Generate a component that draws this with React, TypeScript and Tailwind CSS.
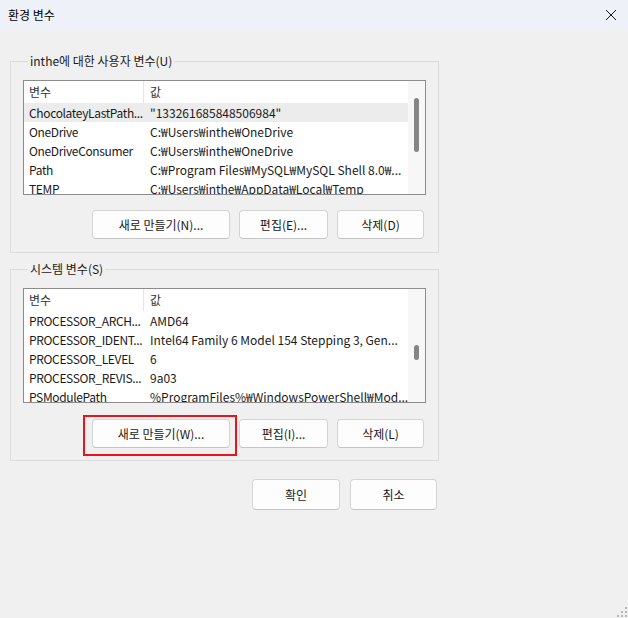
import React from 'react';

type Row = [string, string];

const userVars: Row[] = [
  ['ChocolateyLastPath...', '"133261685848506984"'],
  ['OneDrive', 'C:₩Users₩inthe₩OneDrive'],
  ['OneDriveConsumer', 'C:₩Users₩inthe₩OneDrive'],
  ['Path', 'C:₩Program Files₩MySQL₩MySQL Shell 8.0₩...'],
  ['TEMP', 'C:₩Users₩inthe₩AppData₩Local₩Temp'],
];

const systemVars: Row[] = [
  ['PROCESSOR_ARCH...', 'AMD64'],
  ['PROCESSOR_IDENT...', 'Intel64 Family 6 Model 154 Stepping 3, Gen...'],
  ['PROCESSOR_LEVEL', '6'],
  ['PROCESSOR_REVIS...', '9a03'],
  ['PSModulePath', '%ProgramFiles%₩WindowsPowerShell₩Mod...'],
];

function VarList({ rows, selected, thumbTop, thumbHeight }: { rows: Row[]; selected?: number; thumbTop: string; thumbHeight: string }) {
  return (
    <div className="flex h-[115px] w-[403px] overflow-hidden border border-[#8c8c8c] bg-white">
      <div className="flex-1 overflow-hidden">
        <div className="flex h-[22px] items-center text-[#333]">
          <div className="h-full w-[119px] pl-[5px] leading-[22px]">변수</div>
          <div className="h-full border-l border-[#e5e5e5] pl-[6px] leading-[22px]">값</div>
        </div>
        {rows.map(([name, value], i) => (
          <div key={name} className={`flex h-[19px] items-center whitespace-nowrap text-[#1a1a1a] ${i === selected ? 'bg-[#ececec]' : ''}`}>
            <div className="w-[120px] shrink-0 pl-[5px] tracking-[-0.35px]">{name}</div>
            <div className="pl-[6px]">{value}</div>
          </div>
        ))}
      </div>
      <div className="relative w-[17px] shrink-0 bg-[#f7f7f7]">
        <div className={`absolute left-[6px] w-[5px] rounded-full bg-[#858585] ${thumbTop} ${thumbHeight}`} />
      </div>
    </div>
  );
}

function Btn({ children, className = '' }: { children: React.ReactNode; className?: string }) {
  return (
    <button className={`flex h-[29px] items-center justify-center rounded-[4px] border border-[#d4d4d4] border-b-[#c4c4c4] bg-[#fdfdfd] text-[#1a1a1a] ${className}`}>
      {children}
    </button>
  );
}

export default function App() {
  return (
    <div
      className="relative h-[618px] w-[628px] bg-[#f0f0f0] text-[12px]"
      style={{ fontFamily: '"Noto Sans CJK KR", "Noto Sans", sans-serif' }}
    >
      {/* Title bar */}
      <div className="flex h-[30px] items-center justify-between bg-[#eef2f8] pl-[8px] pr-[10px]">
        <span className="text-[12px] text-black">환경 변수</span>
        <svg width="12" height="12" viewBox="0 0 12 12" className="mr-[1px]">
          <path d="M1 1 L11 11 M11 1 L1 11" stroke="#111" strokeWidth="1" />
        </svg>
      </div>

      <div className="pl-[10px] pt-[23px]">
        {/* User variables */}
        <fieldset className="h-[200px] w-[428px] border border-[#dcdcdc] px-[12px]">
          <legend className="ml-[5px] px-[2px] leading-[16px] text-[#1a1a1a]">inthe에 대한 사용자 변수(U)</legend>
          <div className="pt-[11px]">
            <VarList rows={userVars} selected={0} thumbTop="top-[17px]" thumbHeight="h-[54px]" />
          </div>
          <div className="mt-[15px] flex justify-end gap-[9px] pr-[2px]">
            <Btn className="w-[138px]">새로 만들기(N)...</Btn>
            <Btn className="w-[89px]">편집(E)...</Btn>
            <Btn className="w-[87px]">삭제(D)</Btn>
          </div>
        </fieldset>

        {/* System variables */}
        <fieldset className="mt-[8px] h-[200px] w-[428px] border border-[#dcdcdc] px-[12px]">
          <legend className="ml-[5px] px-[2px] leading-[16px] text-[#1a1a1a]">시스템 변수(S)</legend>
          <div className="pt-[11px]">
            <VarList rows={systemVars} thumbTop="top-[56px]" thumbHeight="h-[15px]" />
          </div>
          <div className="mt-[16px] flex justify-end gap-[9px] pr-[2px]">
            <div className="relative">
              <Btn className="w-[138px] border-[#6aa7dc] border-b-[#5a9bd4] bg-[#e1effa]">새로 만들기(W)...</Btn>
              <div className="pointer-events-none absolute -bottom-[8px] -left-[9px] -right-[7px] -top-[4px] border-2 border-[#e8141c]" />
            </div>
            <Btn className="w-[89px]">편집(I)...</Btn>
            <Btn className="w-[87px]">삭제(L)</Btn>
          </div>
        </fieldset>

        {/* Dialog buttons */}
        <div className="mt-[18px] flex w-[428px] justify-end gap-[10px] pr-[1px]">
          <Btn className="h-[31px] w-[88px] border-[#4f97dc] border-b-[#4f97dc]">확인</Btn>
          <Btn className="h-[31px] w-[87px]">취소</Btn>
        </div>
      </div>

      {/* Resize grip */}
      <svg width="10" height="10" viewBox="0 0 10 10" className="absolute bottom-[1px] right-[1px]">
        <g fill="#b8b8b8">
          <rect x="8" y="0" width="2" height="2" />
          <rect x="4" y="4" width="2" height="2" />
          <rect x="8" y="4" width="2" height="2" />
          <rect x="0" y="8" width="2" height="2" />
          <rect x="4" y="8" width="2" height="2" />
          <rect x="8" y="8" width="2" height="2" />
        </g>
      </svg>
    </div>
  );
}
